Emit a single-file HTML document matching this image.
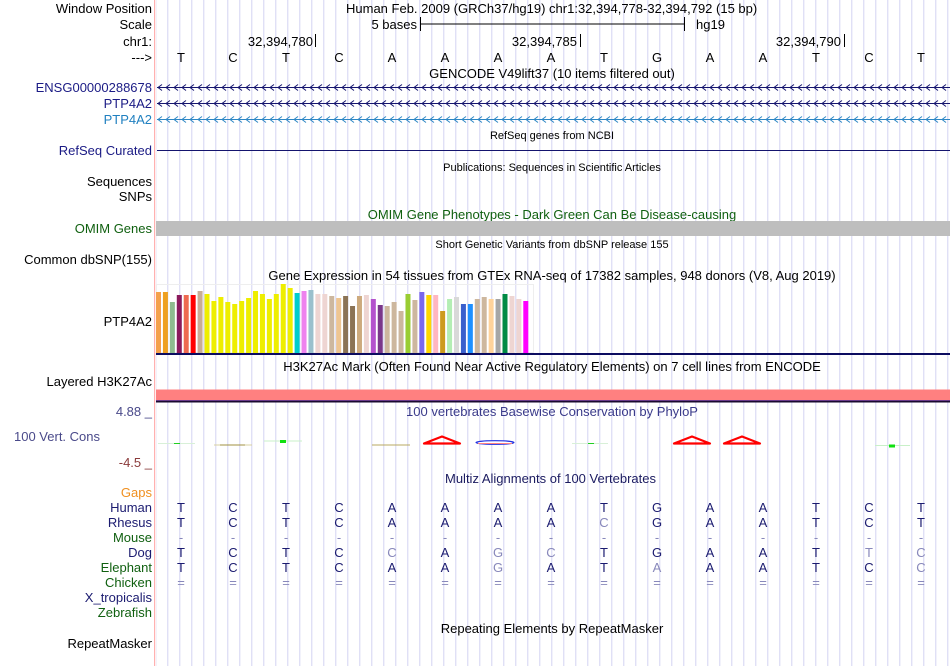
<!DOCTYPE html>
<html><head><meta charset="utf-8"><style>
html,body{margin:0;padding:0;background:#fff;width:950px;height:666px;overflow:hidden}
svg{display:block}
text{font-family:"Liberation Sans",sans-serif;font-size:13px}
.l{text-anchor:end}
.c{text-anchor:middle}
.s{font-size:11px}
</style></head><body>
<svg width="950" height="666" viewBox="0 0 950 666" xmlns="http://www.w3.org/2000/svg">
<defs>
<pattern id="grid" x="167.3" y="0" width="12" height="666" patternUnits="userSpaceOnUse">
<rect x="0" y="0" width="1" height="666" fill="#d2d2f2"/>
</pattern>
</defs>
<rect x="156" y="0" width="794" height="666" fill="url(#grid)"/>
<rect x="154" y="0" width="1.2" height="666" fill="#ffb0b0"/>

<text x="152" y="13" class="l">Window Position</text>
<text x="152" y="29" class="l">Scale</text>
<text x="152" y="46" class="l">chr1:</text>
<text x="152" y="62" class="l">---&gt;</text>
<text x="346" y="13">Human Feb. 2009 (GRCh37/hg19)   chr1:32,394,778-32,394,792 (15 bp)</text>
<text x="417" y="29" class="l">5 bases</text>
<line x1="420" y1="24" x2="684" y2="24" stroke="#000"/>
<line x1="420.5" y1="17" x2="420.5" y2="31" stroke="#000"/>
<line x1="684.5" y1="17" x2="684.5" y2="31" stroke="#000"/>
<text x="696" y="29">hg19</text>
<text x="313" y="46" class="l">32,394,780</text><line x1="315.5" y1="34" x2="315.5" y2="47" stroke="#000"/>
<text x="577" y="46" class="l">32,394,785</text><line x1="580.5" y1="34" x2="580.5" y2="47" stroke="#000"/>
<text x="841" y="46" class="l">32,394,790</text><line x1="844.5" y1="34" x2="844.5" y2="47" stroke="#000"/>
<text x="181" y="62" class="c">T</text><text x="233" y="62" class="c">C</text><text x="286" y="62" class="c">T</text><text x="339" y="62" class="c">C</text><text x="392" y="62" class="c">A</text><text x="445" y="62" class="c">A</text><text x="498" y="62" class="c">A</text><text x="551" y="62" class="c">A</text><text x="604" y="62" class="c">T</text><text x="657" y="62" class="c">G</text><text x="710" y="62" class="c">A</text><text x="763" y="62" class="c">A</text><text x="816" y="62" class="c">T</text><text x="869" y="62" class="c">C</text><text x="921" y="62" class="c">T</text>
<text x="552" y="78" class="c">GENCODE V49lift37 (10 items filtered out)</text>

<text x="152" y="92" class="l" fill="#1b1b85">ENSG00000288678</text>
<text x="152" y="108" class="l" fill="#1b1b85">PTP4A2</text>
<text x="152" y="124" class="l" fill="#2080c0">PTP4A2</text>
<line x1="157" y1="87.5" x2="950" y2="87.5" stroke="#14146e"/>
<line x1="157" y1="103.5" x2="950" y2="103.5" stroke="#14146e"/>
<line x1="157" y1="119.5" x2="950" y2="119.5" stroke="#2c86c4"/>

<text x="552" y="139" class="c s">RefSeq genes from NCBI</text>
<text x="152" y="155" class="l" fill="#1b1b85">RefSeq Curated</text>
<line x1="157" y1="150.5" x2="950" y2="150.5" stroke="#14146e"/>
<text x="552" y="171" class="c s">Publications: Sequences in Scientific Articles</text>
<text x="152" y="186" class="l">Sequences</text>
<text x="152" y="201" class="l">SNPs</text>
<text x="552" y="219" class="c" fill="#106010">OMIM Gene Phenotypes - Dark Green Can Be Disease-causing</text>
<text x="152" y="233" class="l" fill="#106010">OMIM Genes</text>
<rect x="156" y="221" width="794" height="15" fill="#bebebe"/>
<text x="552" y="248" class="c s">Short Genetic Variants from dbSNP release 155</text>
<text x="152" y="264" class="l">Common dbSNP(155)</text>
<text x="552" y="280" class="c">Gene Expression in 54 tissues from GTEx RNA-seq of 17382 samples, 948 donors (V8, Aug 2019)</text>
<text x="152" y="326" class="l">PTP4A2</text>
<rect x="156.5" y="284.5" width="377" height="68" fill="none" stroke="#eee"/>
<g id="bars"></g>
<rect x="156" y="353" width="794" height="2" fill="#0c0c60"/>

<text x="552" y="371" class="c">H3K27Ac Mark (Often Found Near Active Regulatory Elements) on 7 cell lines from ENCODE</text>
<text x="152" y="386" class="l">Layered H3K27Ac</text>
<rect x="156" y="389.5" width="794" height="10.5" fill="#ff8080"/>
<rect x="156" y="400" width="794" height="1" fill="#6a3a8a"/>
<rect x="156" y="401" width="794" height="1.5" fill="#1a0a30"/>

<text x="152" y="416" class="l" fill="#4a4a8a">4.88 _</text>
<text x="100" y="441" class="l" fill="#4a4a8a">100 Vert. Cons</text>
<text x="152" y="467" class="l" fill="#8a3a3a">-4.5 _</text>
<text x="552" y="416" class="c" fill="#3a3a8a">100 vertebrates Basewise Conservation by PhyloP</text>
<g>
<line x1="158" y1="443.5" x2="195" y2="443.5" stroke="#d8f0d8"/><rect x="174" y="443" width="6" height="1" fill="#20d020"/>
<line x1="214" y1="445" x2="252" y2="445" stroke="#d8d0a0"/><line x1="220" y1="445" x2="245" y2="445" stroke="#a09040"/>
<line x1="264" y1="441" x2="302" y2="441" stroke="#c8f0c8"/><rect x="280" y="440" width="6" height="3" fill="#10e010"/>
<line x1="372" y1="445" x2="410" y2="445" stroke="#b8a860"/>
<path d="M424,443.5 L442,436.5 L460,443.5 Z" fill="none" stroke="#f00" stroke-width="2.2" stroke-linejoin="round"/>
<ellipse cx="495" cy="442.5" rx="19" ry="1.8" fill="#fff" stroke="#2030e0" stroke-width="1.2"/><line x1="478" y1="443.5" x2="512" y2="443.5" stroke="#ff8080"/>
<line x1="572" y1="443.5" x2="608" y2="443.5" stroke="#d8f0d8"/><rect x="588" y="443" width="6" height="1" fill="#20d020"/>
<path d="M674,443.5 L692,436.5 L710,443.5 Z" fill="none" stroke="#f00" stroke-width="2.2" stroke-linejoin="round"/>
<path d="M724,443.5 L742,436.5 L760,443.5 Z" fill="none" stroke="#f00" stroke-width="2.2" stroke-linejoin="round"/>
<line x1="875" y1="445.5" x2="910" y2="445.5" stroke="#c8f0c8"/><rect x="889" y="444.5" width="6" height="3" fill="#10e010"/>
</g>

<text x="445" y="483" fill="#1b1b60">Multiz Alignments of 100 Vertebrates</text>
<text x="152" y="497" class="l" fill="#f09020">Gaps</text>
<text x="152" y="512" class="l" fill="#1b1b70">Human</text>
<text x="152" y="527" class="l" fill="#1b1b70">Rhesus</text>
<text x="152" y="542" class="l" fill="#106010">Mouse</text>
<text x="152" y="557" class="l" fill="#1b1b70">Dog</text>
<text x="152" y="572" class="l" fill="#106010">Elephant</text>
<text x="152" y="587" class="l" fill="#106010">Chicken</text>
<text x="152" y="602" class="l" fill="#1b1b70">X_tropicalis</text>
<text x="152" y="617" class="l" fill="#106010">Zebrafish</text>
<g id="mz"></g>

<text x="552" y="633" class="c">Repeating Elements by RepeatMasker</text>
<text x="152" y="648" class="l">RepeatMasker</text>
<g id="chevlines"></g>
</svg>
<script>
var NS="http://www.w3.org/2000/svg";
function el(t,a,p,txt){var e=document.createElementNS(NS,t);for(var k in a)e.setAttribute(k,a[k]);if(txt!==undefined)e.textContent=txt;p.appendChild(e);return e;}
var g=document.getElementById('chevlines');
[[87.5,'#14146e'],[103.5,'#14146e'],[119.5,'#2c86c4']].forEach(function(r){
 var d='';for(var x=158;x<946;x+=8){d+='M'+(x+4)+','+(r[0]-3)+' L'+x+','+r[0]+' L'+(x+4)+','+(r[0]+3)+' ';}
 el('path',{d:d,fill:'none',stroke:r[1],'stroke-width':'1'},g);
});
var B=[["#f4a04c",292],["#eea020",292],["#8fbc8f",302],["#8b1a5c",295],["#ee6a50",295],["#ff0000",295],["#c9ad96",291],["#eeee00",294],["#eeee00",301],["#eeee00",297],["#eeee00",302],["#eeee00",304],["#eeee00",301],["#eeee00",298],["#eeee00",291],["#eeee00",294],["#eeee00",299],["#eeee00",294],["#eeee00",284],["#eeee00",288],["#00cdcd",293],["#ee82ee",291],["#9ac0cd",290],["#eed5d2",294],["#eed5d2",294],["#cdb79e",296],["#eec591",298],["#8b7355",296],["#8b7355",306],["#cdaa7d",296],["#eed5d2",295],["#b452cd",299],["#7a378b",305],["#cdb79e",306],["#cdb79e",302],["#cdb79e",311],["#9acd32",294],["#cdb79e",300],["#7b68ee",292],["#ffd700",295],["#ffb6c1",295],["#cd9b1d",311],["#b4eeb4",299],["#d9d9d9",297],["#3a5fcd",304],["#1e90ff",304],["#cdb79e",299],["#cdb79e",297],["#ffd39b",299],["#a6a6a6",299],["#008b45",294],["#eed5d2",296],["#eed5d2",299],["#ff00ff",301]];
var bg=document.getElementById('bars');
B.forEach(function(b,i){el('rect',{x:(156+i*6.93).toFixed(2),y:b[1],width:5,height:353-b[1],fill:b[0]},bg);});
var mz=document.getElementById('mz');
var xs=[181,233,286,339,392,445,498,551,604,657,710,763,816,869,921];
var N='#1b1b70',G='#8888bb';
var rows=[
 [512,"TCTCAAAATGAATCT","000000000000000"],
 [527,"TCTCAAAACGAATCT","000000001000000"],
 [542,"---------------","111111111111111"],
 [557,"TCTCCAGCTGAATTC","000010110000011"],
 [572,"TCTCAAGATAAATCC","000000100100001"],
 [587,"===============","111111111111111"]];
rows.forEach(function(r){for(var i=0;i<15;i++)el('text',{x:xs[i],y:r[0],'text-anchor':'middle',fill:r[2][i]=='1'?G:N},mz,r[1][i]);});
</script>
</body></html>
